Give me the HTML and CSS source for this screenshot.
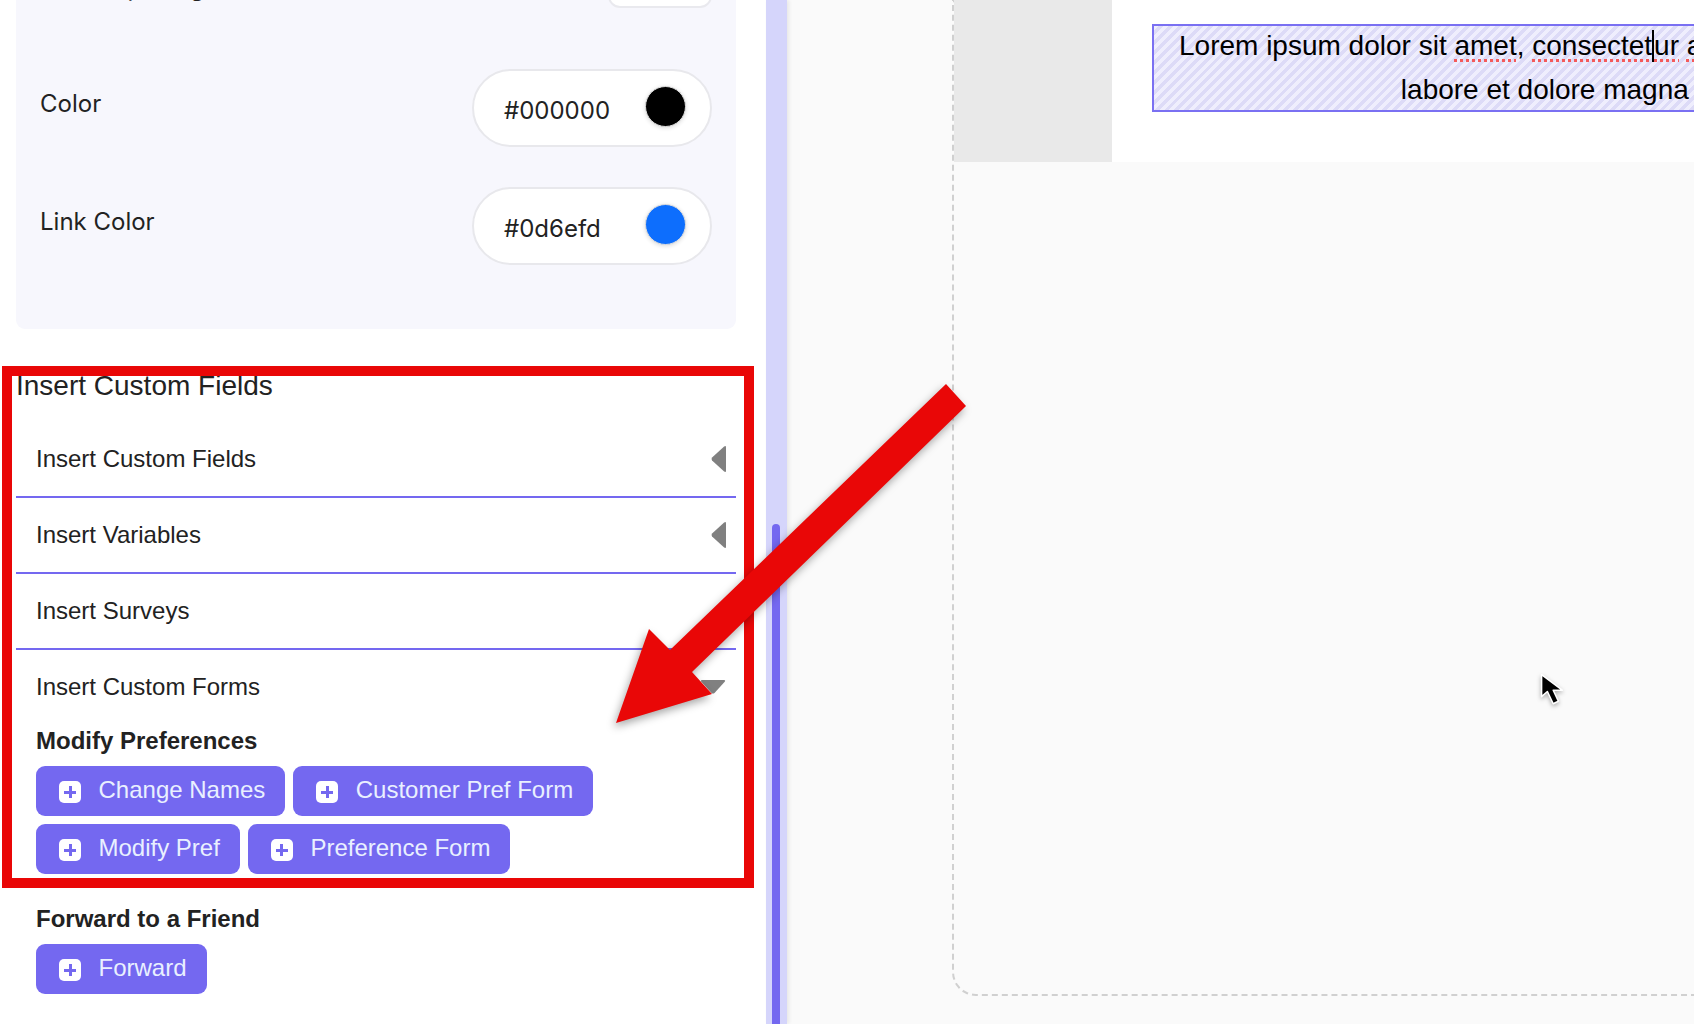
FILE: index.html
```html
<!DOCTYPE html>
<html lang="en">
<head>
    <meta charset="UTF-8">
    <meta name="viewport" content="width=device-width, initial-scale=1.0">
    <title>Email Builder</title>
    <link rel="stylesheet" href="styles.css">
</head>
<body>

    <div class="page">
        <aside class="sidebar">
            <section class="panel">
                <div class="panel-row panel-row-stub">
                    <span class="panel-label">Letter Spacing</span>
                    <div class="stub-input"></div>
                </div>
                <div class="panel-row">
                    <span class="panel-label">Color</span>
                    <div class="color-pill">
                        <span class="color-value">#000000</span>
                        <span class="swatch swatch-black"></span>
                    </div>
                </div>
                <div class="panel-row">
                    <span class="panel-label">Link Color</span>
                    <div class="color-pill">
                        <span class="color-value">#0d6efd</span>
                        <span class="swatch swatch-blue"></span>
                    </div>
                </div>
            </section>

            <h2 class="section-title">Insert Custom Fields</h2>

            <div class="accordion">
                <div class="accordion-item">
                    <span>Insert Custom Fields</span>
                    <svg class="caret" width="15" height="28" viewBox="0 0 14 26"><path d="M14 2 V24 Q14 26 12 24.500 L1 14.500 Q0 13 1 11.500 L12 1.500 Q14 0 14 2 Z"/></svg>
                </div>
                <div class="accordion-item">
                    <span>Insert Variables</span>
                    <svg class="caret" width="15" height="28" viewBox="0 0 14 26"><path d="M14 2 V24 Q14 26 12 24.500 L1 14.500 Q0 13 1 11.500 L12 1.500 Q14 0 14 2 Z"/></svg>
                </div>
                <div class="accordion-item">
                    <span>Insert Surveys</span>
                </div>
                <div class="accordion-item accordion-open">
                    <span>Insert Custom Forms</span>
                    <svg class="caret caret-down" width="26" height="14" viewBox="0 0 26 14"><path d="M2 0 H24 Q26 0 24.500 2 L14.500 13 Q13 14 11.500 13 L1.500 2 Q0 0 2 0 Z"/></svg>
                </div>
            </div>

            <div class="form-group">
                <h3 class="group-title">Modify Preferences</h3>
                <div class="btn-list">
                    <button class="add-btn"><span class="plus"></span>Change Names</button>
                    <button class="add-btn"><span class="plus"></span>Customer Pref Form</button>
                    <button class="add-btn"><span class="plus"></span>Modify Pref</button>
                    <button class="add-btn"><span class="plus"></span>Preference Form</button>
                </div>
            </div>

            <div class="form-group form-group-next">
                <h3 class="group-title">Forward to a Friend</h3>
                <div class="btn-list">
                    <button class="add-btn"><span class="plus"></span>Forward</button>
                </div>
            </div>
        </aside>

        <div class="scroll-track">
            <div class="scroll-thumb"></div>
        </div>

        <main class="workspace">
            <div class="canvas">
                <div class="email-row">
                    <div class="email-gutter"></div>
                    <div class="email-body">
                        <div class="text-block">
                            <p>Lorem ipsum dolor sit <span class="misspelled">amet</span>, <span class="misspelled">consectet<span class="text-caret"></span>ur</span> <span class="misspelled">adipiscing</span> elit, sed do eiusmod tempor<br>labore et dolore magna aliqua.</p>
                        </div>
                    </div>
                </div>
            </div>
        </main>
    </div>

    <!-- annotation drawn over the screenshot -->
    <div class="callout-box"></div>
    <svg class="callout-arrow" width="1694" height="1024" viewBox="0 0 1694 1024">
        <polygon points="946,384 966,406 692,672 712,694 616,723 649,629 670,650"/>
    </svg>
    <svg class="pointer" width="31" height="39" viewBox="0 0 24 30">
        <path d="M2 2 V19 L6.500 15 L11 24.500 L15 22.500 L11 14 L18 14 Z" fill="#000" stroke="#fff" stroke-width="1.200" stroke-linejoin="round"/>
    </svg>

</body>
</html>
```

FILE: styles.css
```css
* {
    box-sizing: border-box;
}

html, body {
    margin: 0;
    padding: 0;
    height: 100%;
    overflow: hidden;
}

body {
    font-family: "Liberation Sans", Arial, sans-serif;
    color: #222;
    background: #fff;
}

.page {
    display: flex;
    height: 1024px;
    overflow: hidden;
}

/* left column */
.sidebar {
    width: 766px;
    flex-shrink: 0;
    padding: 0 30px 0 16px;
    background: #fff;
}

.panel {
    margin-top: -52px;
    height: 381px;
    background: #f7f7fd;
    border-radius: 0 0 9px 9px;
    padding: 0 24px;
}

.panel-row {
    display: flex;
    justify-content: space-between;
    margin-bottom: 40px;
}

.panel-row-stub {
    margin-bottom: 61px;
}

.panel-label {
    font-family: Inter, sans-serif;
    font-size: 24px;
    line-height: 32px;
    padding-top: 19px;
    color: #222;
}

.panel-row-stub .panel-label {
    padding-top: 24px;
}

.stub-input {
    width: 104px;
    height: 60px;
    background: #fff;
    border: 2px solid #e9e9ee;
    border-radius: 12px;
}

.color-pill {
    width: 240px;
    height: 78px;
    display: flex;
    align-items: center;
    justify-content: space-between;
    padding: 0 24px 0 30px;
    background: #fff;
    border: 2px solid #e8e8ec;
    border-radius: 39px;
}

.color-value {
    font-family: Inter, sans-serif;
    font-size: 24px;
    padding-top: 4px;
    color: #222;
}

.swatch {
    width: 41px;
    height: 41px;
    border-radius: 50%;
    margin-top: -3px;
    border: 1px solid #ddd;
    box-shadow: 0 1px 4px rgba(0, 0, 0, 0.15);
}

.swatch-black {
    background: #000;
}

.swatch-blue {
    background: #0d6efd;
}

.section-title {
    margin: 40px 0 19px;
    font-size: 28px;
    font-weight: normal;
    line-height: 34px;
    color: #222;
}

.accordion-item {
    height: 76px;
    display: flex;
    align-items: center;
    justify-content: space-between;
    padding: 0 10px 0 20px;
    border-bottom: 2px solid #7468f0;
    font-size: 24px;
    color: #222;
}

.accordion-open {
    padding-bottom: 2px;
    border-bottom: none;
}

.caret path {
    fill: #808080;
}

.form-group {
    padding-left: 20px;
}

.form-group-next {
    margin-top: 30px;
}

.group-title {
    margin: 0 0 10px;
    font-size: 24px;
    font-weight: bold;
    line-height: 30px;
    color: #222;
}

.btn-list {
    display: flex;
    flex-wrap: wrap;
    gap: 8px;
}

.add-btn {
    display: flex;
    align-items: center;
    height: 50px;
    padding: 0 20px 2px 23px;
    border: none;
    border-radius: 9px;
    background: #7468f0;
    color: #e9f0ff;
    font-family: "Liberation Sans", Arial, sans-serif;
    font-size: 24px;
}

.plus {
    position: relative;
    width: 22px;
    height: 22px;
    margin: 4px 17.500px 0 0;
    background: #fff;
    border-radius: 5px;
}

.plus::before,
.plus::after {
    content: "";
    position: absolute;
    background: #7468f0;
}

.plus::before {
    left: 5px;
    top: 9.500px;
    width: 12px;
    height: 3px;
}

.plus::after {
    left: 9.500px;
    top: 5px;
    width: 3px;
    height: 12px;
}

/* scrollbar */
.scroll-track {
    width: 21px;
    flex-shrink: 0;
    padding: 524px 7px 0 6px;
    background: #d5d5fb;
    box-shadow: 2px 0 4px rgba(0, 0, 0, 0.08);
    z-index: 1;
}

.scroll-thumb {
    height: 600px;
    background: #7468f0;
    border-radius: 4px 4px 0 0;
}

/* right side */
.workspace {
    flex: 1;
    min-width: 0;
    padding-left: 165px;
    background: #fafafa;
    overflow: hidden;
}

.canvas {
    width: 1200px;
    height: 996px;
    background: #fafafa;
    border: 2px dashed #d0d0d0;
    border-top: none;
    border-radius: 0 0 0 24px;
}

.email-row {
    display: flex;
    height: 162px;
}

.email-gutter {
    width: 158px;
    flex-shrink: 0;
    background: #e9e9e9;
}

.email-body {
    flex: 1;
    min-width: 0;
    padding: 24px 0 0 40px;
    background: #fff;
}

.text-block {
    width: 876px;
    height: 88px;
    border: 2px solid #7a70f2;
    background: repeating-linear-gradient(135deg, #efeefd 0, #efeefd 3.500px, #dddbf7 3.500px, #dddbf7 7px);
}

.text-block p {
    margin: -2px 0 0;
    padding: 0 25px;
    font-size: 28px;
    line-height: 44px;
    text-align: center;
    color: #000;
    white-space: nowrap;
}

.misspelled {
    text-decoration: underline dotted #f45a5a 3px;
    text-underline-offset: 4px;
}

.text-caret {
    display: inline-block;
    width: 0;
    height: 32px;
    margin-bottom: -7px;
    border-left: 2px solid #000;
}

/* annotation on top */
.callout-box {
    position: absolute;
    left: 2px;
    top: 366px;
    width: 752px;
    height: 522px;
    border: 10px solid #e90707;
    z-index: 2;
}

.callout-arrow {
    position: absolute;
    left: 0;
    top: 0;
    z-index: 2;
    filter: drop-shadow(-2px 4px 4px rgba(0, 0, 0, 0.35));
}

.callout-arrow polygon {
    fill: #e90707;
}

.pointer {
    position: absolute;
    left: 1539px;
    top: 672px;
    z-index: 2;
    filter: drop-shadow(0 2px 2px rgba(0, 0, 0, 0.3));
}
```
